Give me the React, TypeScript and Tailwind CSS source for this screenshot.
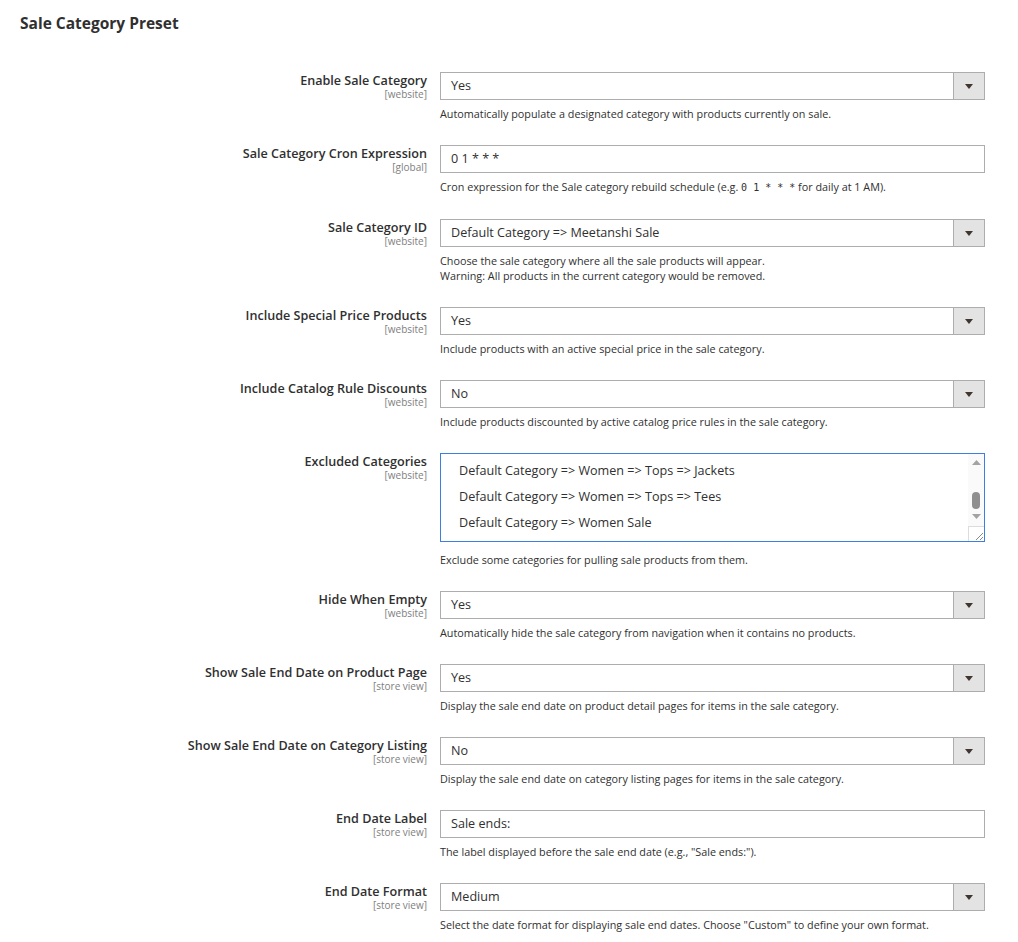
import * as React from "react";

type Field = {
  label: string;
  scope: string;
  kind: "select" | "text" | "multi";
  value?: string;
  note: React.ReactNode;
};

const Code = ({ children }: { children: React.ReactNode }) => (
  <code className="font-['DejaVu_Sans_Mono',monospace] text-[10px] leading-none text-[#303030]">{children}</code>
);

const fields: Field[] = [
  {
    label: "Enable Sale Category",
    scope: "[website]",
    kind: "select",
    value: "Yes",
    note: "Automatically populate a designated category with products currently on sale.",
  },
  {
    label: "Sale Category Cron Expression",
    scope: "[global]",
    kind: "text",
    value: "0 1 * * *",
    note: (
      <span className="inline-block pb-[1px]">
        Cron expression for the Sale category rebuild schedule (e.g. <Code>0 1 * * *</Code> for daily at 1 AM).
      </span>
    ),
  },
  {
    label: "Sale Category ID",
    scope: "[website]",
    kind: "select",
    value: "Default Category => Meetanshi Sale",
    note: (
      <>
        Choose the sale category where all the sale products will appear.
        <br />
        Warning: All products in the current category would be removed.
      </>
    ),
  },
  {
    label: "Include Special Price Products",
    scope: "[website]",
    kind: "select",
    value: "Yes",
    note: "Include products with an active special price in the sale category.",
  },
  {
    label: "Include Catalog Rule Discounts",
    scope: "[website]",
    kind: "select",
    value: "No",
    note: "Include products discounted by active catalog price rules in the sale category.",
  },
  {
    label: "Excluded Categories",
    scope: "[website]",
    kind: "multi",
    note: "Exclude some categories for pulling sale products from them.",
  },
  {
    label: "Hide When Empty",
    scope: "[website]",
    kind: "select",
    value: "Yes",
    note: "Automatically hide the sale category from navigation when it contains no products.",
  },
  {
    label: "Show Sale End Date on Product Page",
    scope: "[store view]",
    kind: "select",
    value: "Yes",
    note: "Display the sale end date on product detail pages for items in the sale category.",
  },
  {
    label: "Show Sale End Date on Category Listing",
    scope: "[store view]",
    kind: "select",
    value: "No",
    note: "Display the sale end date on category listing pages for items in the sale category.",
  },
  {
    label: "End Date Label",
    scope: "[store view]",
    kind: "text",
    value: "Sale ends:",
    note: 'The label displayed before the sale end date (e.g., "Sale ends:").',
  },
  {
    label: "End Date Format",
    scope: "[store view]",
    kind: "select",
    value: "Medium",
    note: 'Select the date format for displaying sale end dates. Choose "Custom" to define your own format.',
  },
];

const excluded = [
  "Default Category => Women => Tops => Jackets",
  "Default Category => Women => Tops => Tees",
  "Default Category => Women Sale",
];

const SelectBox = ({ value }: { value: string }) => (
  <div className="flex h-[28px] border border-[#adadad] bg-white">
    <div className="flex flex-1 items-center pt-[1px] pl-[10px] text-[12.6px] text-[#303030]">{value}</div>
    <div className="flex w-[31px] items-center justify-center border-l border-[#adadad] bg-[#e3e3e3]">
      <svg width="8" height="5" viewBox="0 0 8 5">
        <polygon points="0,0 8,0 4,5" fill="#41362f" />
      </svg>
    </div>
  </div>
);

const TextBox = ({ value }: { value: string }) => (
  <div className="flex h-[28px] items-center border border-[#adadad] bg-white pt-[1px] pl-[10px] text-[12.6px] text-[#303030]">
    {value}
  </div>
);

const MultiSelect = () => (
  <div className="relative flex h-[89px] border border-[#3d7ee3] bg-white">
    <div className="flex-1 overflow-hidden pt-[4px] pl-[18px]">
      {excluded.map((item) => (
        <div key={item} className="flex h-[26px] items-center text-[12.6px] text-[#303030]">
          {item}
        </div>
      ))}
    </div>
    {/* native-looking scrollbar and resize grip */}
    <div className="flex w-[16px] flex-col items-center bg-[#fafafa]">
      <svg className="mt-[6px]" width="9" height="5" viewBox="0 0 9 5">
        <polygon points="0,5 9,5 4.5,0" fill="#a3a3a3" />
      </svg>
      <div className="mt-[27px] h-[17px] w-[8px] rounded-full bg-[#8f8f8f]" />
      <svg className="mt-[5px]" width="9" height="5" viewBox="0 0 9 5">
        <polygon points="0,0 9,0 4.5,5" fill="#a3a3a3" />
      </svg>
      <div className="mt-auto flex h-[15px] w-[16px] items-end justify-end border-t border-l border-[#dcdcdc] bg-white">
        <svg width="9" height="9" viewBox="0 0 9 9">
          <line x1="1" y1="8" x2="8" y2="1" stroke="#8a8a8a" strokeWidth="1" />
          <line x1="5" y1="8" x2="8" y2="5" stroke="#8a8a8a" strokeWidth="1" />
        </svg>
      </div>
    </div>
  </div>
);

export default function App() {
  return (
    <div className="min-h-screen bg-white font-['Open_Sans',sans-serif] text-[#303030]">
      <h2 className="px-5 pt-[13px] text-[15.5px] leading-[20px] font-bold text-[#303030]">Sale Category Preset</h2>

      <div className="mt-[39px]">
        {fields.map((f) => (
          <div key={f.label} className="mb-[24px] flex">
            <div className="w-[427px] pt-[1px] text-right">
              <div className="text-[12.6px] leading-[16px] font-semibold text-[#303030]">{f.label}</div>
              <div className="text-[10px] leading-[11px] text-[#808080]">{f.scope}</div>
            </div>
            <div className="ml-[13px] w-[545px]">
              {f.kind === "select" && <SelectBox value={f.value ?? ""} />}
              {f.kind === "text" && <TextBox value={f.value ?? ""} />}
              {f.kind === "multi" && <MultiSelect />}
              <div
                className={`${f.kind === "multi" ? "mt-[10px]" : "mt-[6px]"} text-[10.8px] leading-[15px] text-[#303030]`}
              >
                {f.note}
              </div>
            </div>
          </div>
        ))}
      </div>
    </div>
  );
}
